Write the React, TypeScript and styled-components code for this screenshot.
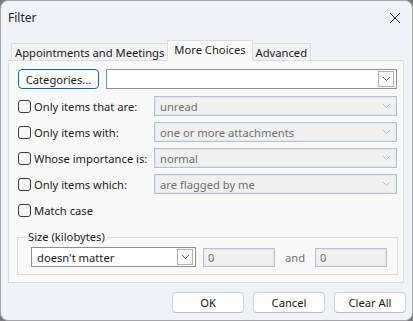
import React from "react";
import styled, { createGlobalStyle } from "styled-components";

const Global = createGlobalStyle`
  html, body { margin: 0; padding: 0; background: #7a7a7a; }
  body { font-family: "Noto Sans", "Open Sans", sans-serif; font-size: 11.2px; color: #1a1a1a; }
  * { box-sizing: border-box; }
`;

const Window = styled.div`
  width: 413px;
  height: 321px;
  background: #eff2f7;
  border: 1px solid #a4a4a4;
  border-radius: 8px;
  overflow: hidden;
  display: flex;
  flex-direction: column;
`;

const TitleBar = styled.div`
  height: 33px;
  flex: none;
  display: flex;
  align-items: center;
  justify-content: space-between;
  padding: 0 9px 0 7px;
  font-size: 12px;
`;

const CloseBtn = styled.div`
  width: 16px;
  height: 16px;
  display: flex;
  align-items: center;
  justify-content: center;
`;

const Tabs = styled.div`
  display: flex;
  align-items: flex-end;
  padding-left: 10px;
  height: 27px;
  margin-bottom: -1px;
  position: relative;
  z-index: 1;
`;

const Tab = styled.div<{ $active?: boolean }>`
  height: ${(p) => (p.$active ? 21 : 18)}px;
  padding: 0 ${(p) => (p.$active ? 6 : 3)}px ${(p) => (p.$active ? 2 : 0)}px;
  display: flex;
  align-items: center;
  background: ${(p) => (p.$active ? "#f9f9f9" : "#f1f2f4")};
  border: 1px solid #dcdcdc;
  border-left-width: ${(p) => (p.$active ? 1 : 0)}px;
  border-right-width: ${(p) => (p.$active ? 1 : 0)}px;
  border-bottom-color: ${(p) => (p.$active ? "#f9f9f9" : "#dcdcdc")};
  white-space: nowrap;
  &:first-child { border-left-width: 1px; }
  &:last-child { border-right-width: 1px; }
`;

const Panel = styled.div`
  margin: 0 8px 0 7px;
  height: 223px;
  background: #f9f9f9;
  border: 1px solid #dcdcdc;
  padding: 8px 6px 0 9px;
  display: flex;
  flex-direction: column;
`;

const Row = styled.div<{ $mt?: number }>`
  display: flex;
  align-items: center;
  height: 20px;
  margin-top: ${(p) => p.$mt ?? 6}px;
`;

const CatButton = styled.div`
  width: 81px;
  height: 20px;
  border: 1px solid #0067c0;
  border-radius: 4px;
  background: #fdfdfd;
  display: flex;
  align-items: center;
  justify-content: center;
  margin-right: 7px;
  flex: none;
`;

const Check = styled.div`
  width: 13px;
  height: 13px;
  border: 1px solid #3b3b3b;
  border-radius: 3px;
  background: #f7f7f7;
  margin-right: 3px;
  flex: none;
`;

const Label = styled.div`
  width: 120px;
  flex: none;
  white-space: nowrap;
`;

const Combo = styled.div<{ $disabled?: boolean; $w?: number }>`
  height: 20px;
  width: ${(p) => (p.$w ? `${p.$w}px` : "auto")};
  flex: ${(p) => (p.$w ? "none" : "1")};
  display: flex;
  align-items: center;
  padding-left: 5px;
  padding-right: 2px;
  background: ${(p) => (p.$disabled ? "#f0f0f0" : "#ffffff")};
  border: 1px solid ${(p) => (p.$disabled ? "#b3c1d2" : "#8f8f8f")};
  box-shadow: ${(p) => (p.$disabled ? "inset 0 0 0 1px #e2e8ef" : "none")};
  color: ${(p) => (p.$disabled ? "#6f6f6f" : "#1a1a1a")};
`;

const ComboText = styled.div`
  flex: 1;
  white-space: nowrap;
  overflow: hidden;
`;

const Arrow = styled.div<{ $disabled?: boolean }>`
  width: 16px;
  height: 16px;
  display: flex;
  align-items: center;
  justify-content: center;
  border: 1px solid ${(p) => (p.$disabled ? "transparent" : "#b0b0b0")};
  background: ${(p) => (p.$disabled ? "transparent" : "#fcfcfc")};
`;

const Group = styled.fieldset`
  margin: 10px 0 0 -1px;
  border: 1px solid #dcdcdc;
  padding: 0 10px 0 13px;
  height: 45px;
  display: flex;
  align-items: flex-start;
`;

const Legend = styled.legend`
  padding: 0 2px;
  margin-left: -5px;
  line-height: 14px;
`;

const GroupRow = styled.div`
  display: flex;
  align-items: center;
  height: 20px;
  margin-top: 3px;
  width: 100%;
`;

const Spacer = styled.div`
  width: 7px;
  flex: none;
`;

const NumInput = styled.div`
  width: 72px;
  height: 19px;
  flex: none;
  background: #f0f0f0;
  border: 1px solid #b3c1d2;
  box-shadow: inset 0 0 0 1px #e2e8ef;
  color: #6f6f6f;
  padding-left: 4px;
  display: flex;
  align-items: center;
`;

const And = styled.div`
  color: #6f6f6f;
  width: 40px;
  flex: none;
  text-align: center;
`;

const Footer = styled.div`
  display: flex;
  justify-content: flex-end;
  gap: 9px;
  padding: 9px 6px 0 0;
`;

const Button = styled.div`
  width: 72px;
  height: 21px;
  border: 1px solid #d3d3d3;
  border-bottom-color: #bdbdbd;
  border-radius: 4px;
  background: #fdfdfd;
  display: flex;
  align-items: center;
  justify-content: center;
`;

const Chevron = ({ color = "#555" }: { color?: string }) => (
  <svg width="9" height="6" viewBox="0 0 9 6">
    <path d="M1 1 L4.5 4.5 L8 1" fill="none" stroke={color} strokeWidth="1" />
  </svg>
);

const DropCombo = ({ text, disabled, w }: { text: string; disabled?: boolean; w?: number }) => (
  <Combo $disabled={disabled} $w={w}>
    <ComboText>{text}</ComboText>
    <Arrow $disabled={disabled}>
      <Chevron color={disabled ? "#bcbcbc" : "#555"} />
    </Arrow>
  </Combo>
);

const rows = [
  { label: "Only items that are:", value: "unread" },
  { label: "Only items with:", value: "one or more attachments" },
  { label: "Whose importance is:", value: "normal" },
  { label: "Only items which:", value: "are flagged by me" },
];

export default function App() {
  return (
    <>
      <Global />
      <Window>
        <TitleBar>
          <span>Filter</span>
          <CloseBtn>
            <svg width="12" height="12" viewBox="0 0 12 12">
              <path d="M1 1 L11 11 M11 1 L1 11" stroke="#222" strokeWidth="1" />
            </svg>
          </CloseBtn>
        </TitleBar>
        <Tabs>
          <Tab>Appointments and Meetings</Tab>
          <Tab $active>More Choices</Tab>
          <Tab>Advanced</Tab>
        </Tabs>
        <Panel>
          <Row $mt={0}>
            <CatButton>Categories...</CatButton>
            <DropCombo text="" />
          </Row>
          {rows.map((r, i) => (
            <Row key={r.label} $mt={i === 0 ? 7 : 6}>
              <Check />
              <Label>{r.label}</Label>
              <DropCombo text={r.value} disabled />
            </Row>
          ))}
          <Row>
            <Check />
            <Label>Match case</Label>
          </Row>
          <Group>
            <Legend>Size (kilobytes)</Legend>
            <GroupRow>
              <DropCombo text="doesn't matter" w={165} />
              <Spacer />
              <NumInput>0</NumInput>
              <And>and</And>
              <NumInput>0</NumInput>
            </GroupRow>
          </Group>
        </Panel>
        <Footer>
          <Button>OK</Button>
          <Button>Cancel</Button>
          <Button>Clear All</Button>
        </Footer>
      </Window>
    </>
  );
}
